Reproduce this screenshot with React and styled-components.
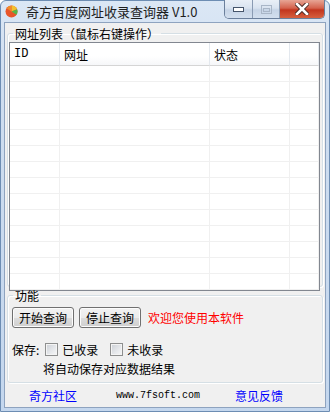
import styled, { createGlobalStyle } from 'styled-components'

const GlobalStyle = createGlobalStyle`
  html, body {
    margin: 0;
    padding: 0;
    background: #ffffff;
  }
  * {
    box-sizing: border-box;
  }
`

const cjk = `"Noto Sans CJK SC", "Liberation Sans", sans-serif`

const Window = styled.div`
  width: 330px;
  height: 412px;
  display: flex;
  flex-direction: column;
  background: linear-gradient(to bottom, #dbe7f5 0%, #cfdef0 20%, #c4d7ee 100%);
  border: 1px solid #6d8db3;
  border-radius: 6px 6px 0 0;
  padding: 0 3px 3px 3px;
  font-family: ${cjk};
  font-size: 12px;
  color: #000;
`
const TitleBar = styled.div`
  height: 21px;
  display: flex;
  align-items: center;
  padding-left: 1px;
`
const TitleText = styled.span`
  margin-left: 8px;
  font-size: 13px;
  color: #1e1e1e;
  line-height: 1;
`
const Caption = styled.div`
  margin-left: auto;
  margin-right: 1px;
  align-self: flex-start;
  display: flex;
  height: 19px;
  margin-top: -1px;
  border: 1px solid #6b7f9b;
  border-top: none;
  border-radius: 0 0 5px 5px;
  overflow: hidden;
`
const CapButton = styled.div`
  width: ${p => p.wide ? 45 : 27}px;
  height: 100%;
  display: flex;
  align-items: center;
  justify-content: center;
  border-left: ${p => p.first ? 'none' : '1px solid #8a9bb3'};
  background: ${p => p.close
    ? 'linear-gradient(to bottom, #e7a595 0%, #d4624d 45%, #c2361f 55%, #d6603f 100%)'
    : 'linear-gradient(to bottom, #e9eff7 0%, #d9e3f0 45%, #c6d4e6 55%, #d3dfee 100%)'};
`
const Client = styled.div`
  flex: 1;
  display: flex;
  flex-direction: column;
  background: #f0f0f0;
  border: 1px solid #8ea3bf;
  padding: 0 2px 0 2px;
`
const Group = styled.fieldset`
  margin: ${p => p.top}px 0 0 0;
  padding: 0 2px 2px 1px;
  border: 1px solid #d5dfe5;
  border-radius: 3px;
  box-shadow: inset 1px 1px 0 #ffffff, 1px 1px 0 #ffffff;
  min-width: 0;
  height: ${p => p.h}px;
  display: flex;
  flex-direction: column;
`
const Legend = styled.legend`
  margin-left: 4px;
  padding: 0 2px;
  font-size: 12px;
  line-height: 13px;
`
const List = styled.div`
  flex: 1;
  margin-top: 2px;
  background: #fff;
  border: 1px solid #828790;
  overflow: hidden;
`
const Grid = styled.div`
  display: grid;
  grid-template-columns: 50px 150px 80px 1fr;
`
const HeadCell = styled.div`
  height: 23px;
  padding-left: 4px;
  display: flex;
  align-items: center;
  border-right: 1px solid #e3e8ee;
  border-bottom: 1px solid #d5d5d5;
  background: linear-gradient(to bottom, #ffffff 0%, #ffffff 60%, #f6f7f9 100%);
  font-family: ${p => p.mono ? '"Liberation Mono", monospace' : cjk};
  font-size: 12px;
`
const Cell = styled.div`
  height: 16px;
  border-right: 1px solid #f0f0f0;
  border-bottom: 1px solid #f0f0f0;
`
const ButtonRow = styled.div`
  display: flex;
  align-items: center;
  gap: 5px;
  margin: 5px 0 0 3px;
`
const Button = styled.button`
  width: 62px;
  height: 21px;
  padding: 0;
  font-family: ${cjk};
  font-size: 12px;
  color: #000;
  border: 1px solid #707070;
  border-radius: 3px;
  background: linear-gradient(to bottom, #f2f2f2 0%, #ebebeb 50%, #dddddd 51%, #cfcfcf 100%);
  box-shadow: inset 0 0 0 1px #fcfcfc;
`
const Welcome = styled.span`
  margin-left: 2px;
  color: #ff0000;
  font-size: 12px;
`
const SaveRow = styled.div`
  display: flex;
  align-items: center;
  margin: 14px 0 0 3px;
  height: 14px;
`
const Check = styled.span`
  width: 13px;
  height: 13px;
  margin: 0 4px 0 ${p => p.gap}px;
  border: 1px solid #8e8f8f;
  background: linear-gradient(135deg, #cbcfd5 0%, #e7e9ec 60%, #f7f7f8 100%);
  box-shadow: inset 0 0 0 1px #f4f4f4;
`
const Note = styled.div`
  margin: 6px 0 0 34px;
  line-height: 14px;
`
const Footer = styled.div`
  flex: 1;
  display: flex;
  align-items: center;
  padding-left: 22px;
`
const Link = styled.span`
  color: #0000ff;
  margin-right: ${p => p.mr}px;
`
const Site = styled.span`
  font-family: "Liberation Mono", monospace;
  font-size: 10px;
  margin-right: 35px;
`

const AppIcon = () => (
  <svg width="13" height="13" viewBox="0 0 26 26">
    <circle cx="13" cy="13" r="12" fill="#e8562a" />
    <path d="M13 13 L13 1 A12 12 0 0 1 24.2 8.6 Z" fill="#f2c12e" />
    <path d="M13 13 L24.2 8.6 A12 12 0 0 1 23 19.5 Z" fill="#56b64a" />
    <path d="M13 13 L13 1 A12 12 0 0 0 3 6.5 Z" fill="#f08b2c" />
  </svg>
)

const rows = Array.from({ length: 14 })

const App = () => {
  return (
    <>
      <GlobalStyle />
      <Window>
        <TitleBar>
          <AppIcon />
          <TitleText>奇方百度网址收录查询器 V1.0</TitleText>
          <Caption>
            <CapButton first>
              <svg width="11" height="5"><rect x="0.5" y="0.5" width="10" height="4" fill="#fff" stroke="#46556b" /></svg>
            </CapButton>
            <CapButton>
              <svg width="11" height="9"><rect x="0.5" y="0.5" width="10" height="8" fill="none" stroke="#a9b6c7" /><rect x="2.5" y="3.5" width="6" height="3" fill="none" stroke="#a9b6c7" /></svg>
            </CapButton>
            <CapButton wide close>
              <svg width="14" height="12" viewBox="0 0 14 12">
                <path d="M2 1 L12 11 M12 1 L2 11" stroke="#4a2a26" strokeWidth="4.5" strokeLinecap="square" />
                <path d="M2 1 L12 11 M12 1 L2 11" stroke="#ffffff" strokeWidth="2.6" strokeLinecap="square" />
              </svg>
            </CapButton>
          </Caption>
        </TitleBar>
        <Client>
          <Group top={4} h={260}>
            <Legend>网址列表（鼠标右键操作）</Legend>
            <List>
              <Grid>
                <HeadCell mono>ID</HeadCell>
                <HeadCell>网址</HeadCell>
                <HeadCell>状态</HeadCell>
                <HeadCell />
                {rows.map((_, i) => (
                  <>
                    <Cell key={`a${i}`} />
                    <Cell key={`b${i}`} />
                    <Cell key={`c${i}`} />
                    <Cell key={`d${i}`} />
                  </>
                ))}
              </Grid>
            </List>
          </Group>
          <Group top={2} h={94}>
            <Legend>功能</Legend>
            <ButtonRow>
              <Button>开始查询</Button>
              <Button>停止查询</Button>
              <Welcome>欢迎您使用本软件</Welcome>
            </ButtonRow>
            <SaveRow>
              保存:
              <Check gap={6} />
              已收录
              <Check gap={12} />
              未收录
            </SaveRow>
            <Note>将自动保存对应数据结果</Note>
          </Group>
          <Footer>
            <Link mr={39}>奇方社区</Link>
            <Site>www.7fsoft.com</Site>
            <Link>意见反馈</Link>
          </Footer>
        </Client>
      </Window>
    </>
  )
}

export default App
